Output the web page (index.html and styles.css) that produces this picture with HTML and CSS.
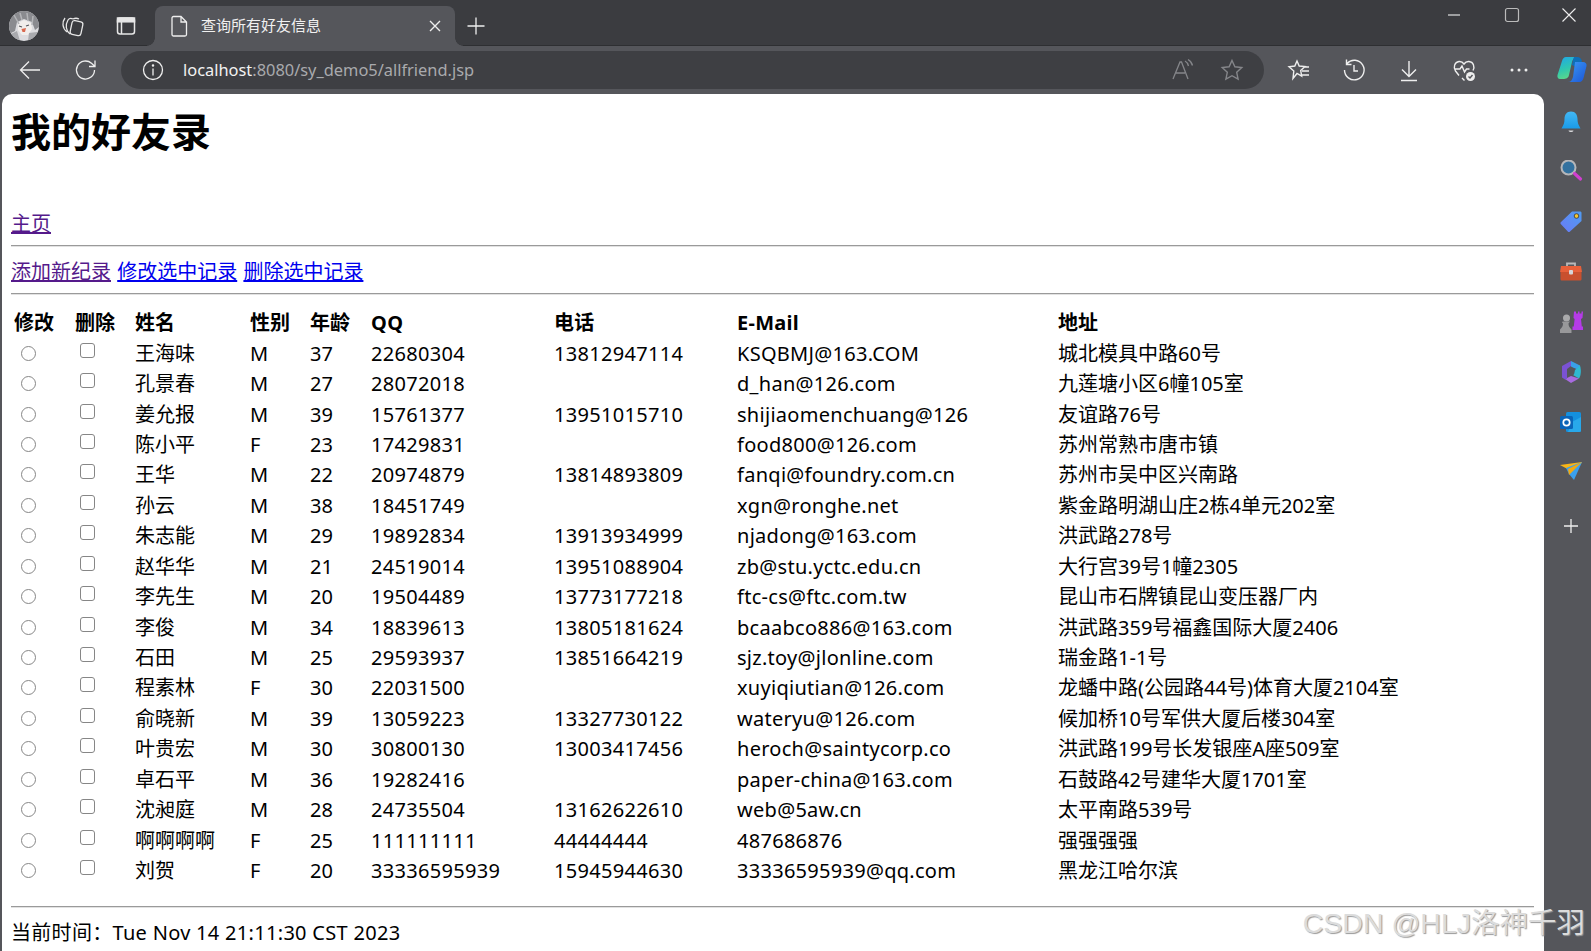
FILE: index.html
```html
<!DOCTYPE html>
<html lang="zh-CN">
<head>
<meta charset="utf-8">
<title>查询所有好友信息</title>
<link rel="stylesheet" href="styles.css">
</head>
<body>
<header class="tabbar">
  <svg class="avatar" viewBox="0 0 30 30"><defs><clipPath id="av"><circle cx="15" cy="15" r="15"/></clipPath></defs><g clip-path="url(#av)"><rect width="30" height="30" fill="#dcdcdf"/><path d="M0 0h30v16l-4 3-3-8-8-3-7 3-2 9-6 3z" fill="#8a8b8f"/><path d="M9 12l6-3 7 3 1 6-4 6h-6l-4-5z" fill="#f1eeec"/><path d="M12.500 18l4.500-1-1 4h-2.500z" fill="#d9694f"/><path d="M0 24l8-4 3 10H0zM20 22l8-1v9h-9z" fill="#a9aaae"/><path d="M5 4l5 9M11 2l2 7M18 2l1 8M24 5l-1 9" stroke="#b4b5b8" stroke-width="1.500"/><path d="M10 15l3 1M17 15l3-1" stroke="#55565b" stroke-width="1.200"/></g></svg>
  <svg class="ico ico-tabs" viewBox="0 0 24 24" fill="none" stroke="#e6e6e6" stroke-width="1.300"><rect x="10" y="7" width="11" height="14" rx="2.500" transform="rotate(12 15 14)"/><path d="M9 20C5 17 4 11 7 6c1-1.500 3-2 5-1M6 18C1 14 1 8 4 4"/><path d="M12 5c2-1 4-1 6 0"/></svg>
  <svg class="ico ico-vtab" viewBox="0 0 24 24" fill="none" stroke="#e6e6e6" stroke-width="1.500"><rect x="3.500" y="4" width="17" height="16" rx="2.500"/><rect x="3.500" y="4" width="17" height="3.800" fill="#e6e6e6"/><path d="M7.500 8v12"/></svg>
  <div class="tab">
    <svg class="ico" viewBox="0 0 24 24" fill="none" stroke="#eee" stroke-width="1.300"><path d="M6.500 2.500h7.500l5.500 5.500v12.500a1.500 1.500 0 0 1-1.500 1.500H6.500A1.500 1.500 0 0 1 5 20.500V4a1.500 1.500 0 0 1 1.500-1.500zM14 2.500V8h5.500"/></svg>
    <span class="tab-title">查询所有好友信息</span>
    <svg class="tab-close" viewBox="0 0 12 12" fill="none" stroke="#eee" stroke-width="1.400"><path d="M1 1l10 10M11 1L1 11"/></svg>
  </div>
  <svg class="ico ico-new" viewBox="0 0 24 24" fill="none" stroke="#eee" stroke-width="1.300"><path d="M12 3.500v17M3.500 12h17"/></svg>
  <div class="winctl">
    <svg class="ico" viewBox="0 0 24 24" fill="none" stroke="#eee" stroke-width="1.100"><path d="M6 12h12"/></svg>
    <svg class="ico" viewBox="0 0 24 24" fill="none" stroke="#bbb" stroke-width="1.200"><rect x="5.500" y="5.500" width="13" height="13" rx="2"/></svg>
    <svg class="ico" viewBox="0 0 24 24" fill="none" stroke="#eee" stroke-width="1.100"><path d="M5.500 5.500l13 13M18.500 5.500l-13 13"/></svg>
  </div>
</header>

<nav class="toolbar">
  <svg class="ico ico-back" viewBox="0 0 24 24" fill="none" stroke="#eee" stroke-width="1.300"><path d="M22 12H2.500M11 3.500L2.500 12l8.500 8.500"/></svg>
  <svg class="ico ico-reload" viewBox="0 0 24 24" fill="none" stroke="#eee" stroke-width="1.300"><path d="M20.500 12a9 9 0 1 1-3-6.700L20.500 8M21 2.500V8.500h-6"/></svg>
  <div class="address">
    <svg class="ico" viewBox="0 0 24 24" fill="none" stroke="#eee" stroke-width="1.300"><circle cx="12" cy="12" r="9.500"/><path d="M12 10.500v7"/><circle cx="12" cy="7.500" r=".6" fill="#eee"/></svg>
    <span class="url"><span class="url-host">localhost</span>:8080/sy_demo5/allfriend.jsp</span>
    <svg class="ico ico-read" viewBox="0 0 24 24" fill="none" stroke="#85868a" stroke-width="1.300"><path d="M3 21L10 4h1.500L18 21M6 15h9M15 3c2 1 3 3 3.500 5M18 1.500c2.500 1.500 4 3.500 4.500 6"/></svg>
    <svg class="ico ico-star" viewBox="0 0 24 24" fill="none" stroke="#85868a" stroke-width="1.400"><path d="M12 2.500l2.900 6.300 6.900.8-5.100 4.700 1.400 6.800-6.100-3.400-6.100 3.400 1.400-6.800L2.200 9.600l6.900-.8z"/></svg>
  </div>
  <svg class="ico ico-fav" viewBox="0 0 24 24" fill="none" stroke="#eee" stroke-width="1.400"><path d="M10 3l2.200 5 5.800.6-4.300 4 1 5.500L10 15.500 6 20.500l.8-7.500L2 8.800 7.800 8zM16 9h6M15 13h7M15 17h7"/></svg>
  <svg class="ico ico-tool" viewBox="0 0 24 24" fill="none" stroke="#eee" stroke-width="1.400"><path d="M5 5.500A9.800 9.800 0 1 1 2.500 12M4.500 1.500v5h5M12 7v6h4"/></svg>
  <svg class="ico ico-tool" viewBox="0 0 24 24" fill="none" stroke="#eee" stroke-width="1.400"><path d="M12 3v15M5 11.500l7 7 7-7M4 22.500h16"/></svg>
  <svg class="ico ico-tool" viewBox="0 0 24 24" fill="none" stroke="#eee" stroke-width="1.400"><path d="M7 17.500L3.500 13C1 9.500 2.500 4 7 3.500c2.500-.2 4 1 5 2.500 1-1.500 2.500-2.700 5-2.500 4.500.5 6 5 4 9M2.500 11H8l2-3 2.500 6 2-3h3M10 20l2.500 2.500"/><circle cx="18.500" cy="18.500" r="4.500" fill="#eee" stroke="none"/><path d="M16.500 18.500l1.500 1.500 2.500-3" stroke="#55565b"/></svg>
  <svg class="ico ico-tool" viewBox="0 0 24 24" fill="#eee"><circle cx="5" cy="12" r="1.500"/><circle cx="12" cy="12" r="1.500"/><circle cx="19" cy="12" r="1.500"/></svg>
  <svg class="ico-copilot" viewBox="0 0 30 30"><defs><linearGradient id="cp1" x1="0" y1="0" x2="0.300" y2="1"><stop offset="0" stop-color="#1fa7ea"/><stop offset=".6" stop-color="#2fc7b0"/><stop offset="1" stop-color="#58d68d"/></linearGradient><linearGradient id="cp2" x1="0" y1="0" x2="1" y2="1"><stop offset="0" stop-color="#3a9bf5"/><stop offset="1" stop-color="#1d55d6"/></linearGradient></defs><path d="M9 2h11c-3 0-4 2-5 5l-3 13c-.5 3-3 4-6 4H3c-2 0-3-2-2.500-4L5 6c.5-2 2-4 4-4z" fill="url(#cp1)"/><path d="M17 2h3c3 0 4 2 5 4l-4 7-6-3 1-5z" fill="#0e6fb8"/><path d="M18 7h8c2.500 0 4 2 3.500 4l-3 12c-.5 2-2 4-4 4H11c3 0 4-2 5-5z" fill="url(#cp2)"/></svg>
</nav>

<div class="main">
  <main class="page">
    <h1 class="title">我的好友录</h1>
    <p class="line line-home"><a class="visited" href="#">主页</a></p>
    <hr class="rule">
    <p class="line line-actions"><a class="visited" href="#">添加新纪录</a> <a href="#">修改选中记录</a> <a href="#">删除选中记录</a></p>
    <hr class="rule">
    <table class="friends">
      <colgroup><col class="c-s"><col class="c-s"><col class="c-name"><col class="c-s"><col class="c-age"><col class="c-num"><col class="c-num"><col class="c-mail"><col class="c-addr"></colgroup>
      <thead><tr><th>修改</th><th>删除</th><th>姓名</th><th>性别</th><th>年龄</th><th>QQ</th><th>电话</th><th>E-Mail</th><th>地址</th></tr></thead>
      <tbody>
        <tr><td><input class="rd" type="radio" name="f"></td><td><input class="cb" type="checkbox"></td><td>王海味</td><td>M</td><td>37</td><td>22680304</td><td>13812947114</td><td>KSQBMJ@163.COM</td><td>城北模具中路60号</td></tr>
        <tr><td><input class="rd" type="radio" name="f"></td><td><input class="cb" type="checkbox"></td><td>孔景春</td><td>M</td><td>27</td><td>28072018</td><td></td><td>d_han@126.com</td><td>九莲塘小区6幢105室</td></tr>
        <tr><td><input class="rd" type="radio" name="f"></td><td><input class="cb" type="checkbox"></td><td>姜允报</td><td>M</td><td>39</td><td>15761377</td><td>13951015710</td><td>shijiaomenchuang@126</td><td>友谊路76号</td></tr>
        <tr><td><input class="rd" type="radio" name="f"></td><td><input class="cb" type="checkbox"></td><td>陈小平</td><td>F</td><td>23</td><td>17429831</td><td></td><td>food800@126.com</td><td>苏州常熟市唐市镇</td></tr>
        <tr><td><input class="rd" type="radio" name="f"></td><td><input class="cb" type="checkbox"></td><td>王华</td><td>M</td><td>22</td><td>20974879</td><td>13814893809</td><td>fanqi@foundry.com.cn</td><td>苏州市吴中区兴南路</td></tr>
        <tr><td><input class="rd" type="radio" name="f"></td><td><input class="cb" type="checkbox"></td><td>孙云</td><td>M</td><td>38</td><td>18451749</td><td></td><td>xgn@ronghe.net</td><td>紫金路明湖山庄2栋4单元202室</td></tr>
        <tr><td><input class="rd" type="radio" name="f"></td><td><input class="cb" type="checkbox"></td><td>朱志能</td><td>M</td><td>29</td><td>19892834</td><td>13913934999</td><td>njadong@163.com</td><td>洪武路278号</td></tr>
        <tr><td><input class="rd" type="radio" name="f"></td><td><input class="cb" type="checkbox"></td><td>赵华华</td><td>M</td><td>21</td><td>24519014</td><td>13951088904</td><td>zb@stu.yctc.edu.cn</td><td>大行宫39号1幢2305</td></tr>
        <tr><td><input class="rd" type="radio" name="f"></td><td><input class="cb" type="checkbox"></td><td>李先生</td><td>M</td><td>20</td><td>19504489</td><td>13773177218</td><td>ftc-cs@ftc.com.tw</td><td>昆山市石牌镇昆山变压器厂内</td></tr>
        <tr><td><input class="rd" type="radio" name="f"></td><td><input class="cb" type="checkbox"></td><td>李俊</td><td>M</td><td>34</td><td>18839613</td><td>13805181624</td><td>bcaabco886@163.com</td><td>洪武路359号福鑫国际大厦2406</td></tr>
        <tr><td><input class="rd" type="radio" name="f"></td><td><input class="cb" type="checkbox"></td><td>石田</td><td>M</td><td>25</td><td>29593937</td><td>13851664219</td><td>sjz.toy@jlonline.com</td><td>瑞金路1-1号</td></tr>
        <tr><td><input class="rd" type="radio" name="f"></td><td><input class="cb" type="checkbox"></td><td>程素林</td><td>F</td><td>30</td><td>22031500</td><td></td><td>xuyiqiutian@126.com</td><td>龙蟠中路(公园路44号)体育大厦2104室</td></tr>
        <tr><td><input class="rd" type="radio" name="f"></td><td><input class="cb" type="checkbox"></td><td>俞晓新</td><td>M</td><td>39</td><td>13059223</td><td>13327730122</td><td>wateryu@126.com</td><td>候加桥10号军供大厦后楼304室</td></tr>
        <tr><td><input class="rd" type="radio" name="f"></td><td><input class="cb" type="checkbox"></td><td>叶贵宏</td><td>M</td><td>30</td><td>30800130</td><td>13003417456</td><td>heroch@saintycorp.co</td><td>洪武路199号长发银座A座509室</td></tr>
        <tr><td><input class="rd" type="radio" name="f"></td><td><input class="cb" type="checkbox"></td><td>卓石平</td><td>M</td><td>36</td><td>19282416</td><td></td><td>paper-china@163.com</td><td>石鼓路42号建华大厦1701室</td></tr>
        <tr><td><input class="rd" type="radio" name="f"></td><td><input class="cb" type="checkbox"></td><td>沈昶庭</td><td>M</td><td>28</td><td>24735504</td><td>13162622610</td><td>web@5aw.cn</td><td>太平南路539号</td></tr>
        <tr><td><input class="rd" type="radio" name="f"></td><td><input class="cb" type="checkbox"></td><td>啊啊啊啊</td><td>F</td><td>25</td><td>111111111</td><td>44444444</td><td>487686876</td><td>强强强强</td></tr>
        <tr><td><input class="rd" type="radio" name="f"></td><td><input class="cb" type="checkbox"></td><td>刘贺</td><td>F</td><td>20</td><td>33336595939</td><td>15945944630</td><td>33336595939@qq.com</td><td>黑龙江哈尔滨</td></tr>
      </tbody>
    </table>
    <hr class="rule rule-end">
    <p class="line line-time">当前时间：Tue Nov 14 21:11:30 CST 2023</p>
  </main>
  <aside class="sidebar">
    <svg class="side" viewBox="0 0 24 24"><defs><linearGradient id="bell" x1="0" y1="0" x2="0" y2="1"><stop offset="0" stop-color="#43b8f5"/><stop offset="1" stop-color="#1a9be8"/></linearGradient></defs><path d="M12 1.500c-4.500 0-6.500 3.500-6.500 7.500 0 4-1 6-3 9.500h19c-2-3.500-3-5.500-3-9.500 0-4-2-7.500-6.500-7.500z" fill="url(#bell)"/><path d="M9.500 20.500h5c-.5 2-4.500 2-5 0z" fill="#d5d5d8"/></svg>
    <svg class="side" viewBox="0 2 24 24" fill="none"><circle cx="9.500" cy="9.500" r="7" fill="#33719f" stroke="#b5b6b9" stroke-width="2"/><path d="M15.500 15.500l6 5.500" stroke="#d13fd0" stroke-width="3.200" stroke-linecap="round"/></svg>
    <svg class="side" viewBox="0 1 24 24"><defs><linearGradient id="tag" x1="0" y1="1" x2="1" y2="0"><stop offset="0" stop-color="#6a7bf5"/><stop offset="1" stop-color="#4f9cf2"/></linearGradient></defs><path d="M13 2.500h8c1 0 1.500.5 1.500 1.500v8L11 22.500c-.7.7-1.500.7-2.200 0L2 15.200c-.7-.7-.7-1.500 0-2.200z" fill="url(#tag)"/><circle cx="17.500" cy="7" r="2.300" fill="#f4c430" stroke="#333" stroke-width=".8"/></svg>
    <svg class="side" viewBox="0 0 24 24"><path d="M8 6V3.500h8V6" fill="none" stroke="#b8b8ba" stroke-width="1.800"/><path d="M2 6h20l1 6H1z" fill="#e8603a"/><path d="M1.500 12h21v7c0 1-.5 1.500-1.500 1.500H3c-1 0-1.500-.5-1.500-1.500z" fill="#c9502e"/><rect x="10" y="10" width="4" height="4.500" rx="1" fill="#d5d5d8"/></svg>
    <svg class="side" viewBox="0 0 24 24"><path d="M15 1.500h2v2h2v-2h1.500v2h2v-2H24L23.500 8l-1.500 1 .8 7.500H24V20H13.500v-3.500h1.300L15.600 9 14.500 8z" fill="#b53be8"/><circle cx="7.500" cy="8" r="3.500" fill="#a9a9ab"/><path d="M4 11.500h7l-1.500 2c0 2.500 1 4 3 6v3.500H1v-3.500c2-2 3-3.500 3-6L2.800 12z" fill="#98989a"/></svg>
    <svg class="side" viewBox="0 0 24 24"><path d="M12 1l9 4.500v5L14 7.500 12 6.500z" fill="#39a0e8"/><path d="M21 5.500c1.500 5 1 10-1 13l-6-3.500 2-5z" fill="#2fb9d0"/><path d="M6 19l6-3 8 2.500L12 23z" fill="#a86be0"/><path d="M3 6l9-5v5l-4 3v10l-2 .5L3 17.500z" fill="#7a52d4"/><circle cx="12" cy="12" r="3.500" fill="#55565b"/></svg>
    <svg class="side" viewBox="0 0 24 24"><rect x="7" y="2" width="15" height="20" rx="1.500" fill="#1490df"/><path d="M13 12l9-5v13c0 1-.5 2-1.500 2H9z" fill="#28a8ea"/><rect x="1" y="6" width="13" height="13" rx="1.500" fill="#0a64b8"/><circle cx="7.500" cy="12.500" r="3.200" fill="none" stroke="#fff" stroke-width="1.700"/></svg>
    <svg class="side" viewBox="0 2 24 24"><path d="M1 7l22-3-7 11z" fill="#f7b519"/><path d="M23 4L7 10l3 6 5 6z" fill="#3aa0ee"/><path d="M23 4L9 11l1 6z" fill="#f4a90f"/></svg>
    <svg class="side side-add" viewBox="0 0 24 24" fill="none" stroke="#eee" stroke-width="1.300"><path d="M12 5v14M5 12h14"/></svg>
  </aside>
</div>
<div class="watermark">CSDN @HLJ洛神千羽</div>
</body>
</html>
```
FILE: styles.css
```css
* { box-sizing: border-box; }
html, body { margin: 0; padding: 0; }
body {
  position: relative;
  width: 1591px;
  height: 951px;
  overflow: hidden;
  background: #55565b;
  font-family: "Noto Sans", "Noto Sans CJK SC", sans-serif;
  color: #000;
}
.ico { width: 24px; height: 24px; flex: none; display: block; }

.tabbar {
  height: 46px;
  background: #3b3c40;
  border-bottom: 1px solid #2e2f32;
  display: flex;
  align-items: center;
  padding: 6px 10px 0 9px;
}
.avatar { width: 30px; height: 30px; flex: none; }
.ico-tabs { margin-left: 22px; }
.ico-vtab { margin-left: 29px; }
.tab {
  position: relative;
  margin-left: 17px;
  margin-bottom: -1px;
  width: 300px;
  height: 40px;
  align-self: flex-end;
  background: #55565b;
  border-radius: 8px 8px 0 0;
  display: flex;
  align-items: center;
  padding: 0 14px 0 12px;
}
.tab::before, .tab::after {
  content: "";
  position: absolute;
  bottom: 0;
  width: 8px;
  height: 8px;
}
.tab::before { left: -8px; background: radial-gradient(circle at 0 0, #3b3c40 7.5px, #55565b 8px); }
.tab::after { right: -8px; background: radial-gradient(circle at 100% 0, #3b3c40 7.5px, #55565b 8px); }
.tab-title {
  margin-left: 10px;
  margin-bottom: 3px;
  font-size: 15px;
  color: #f0f0f0;
  white-space: nowrap;
  flex: 1;
}
.tab-close { width: 12px; height: 12px; flex: none; }
.ico-new { margin-left: 9px; }
.winctl { margin-left: auto; display: flex; gap: 33.5px; margin-top: -22px; }

.toolbar {
  height: 48px;
  background: #55565b;
  display: flex;
  align-items: center;
  padding-left: 18px;
}
.ico-reload { margin-left: 32px; }
.address {
  margin-left: 23px;
  width: 1143px;
  height: 38px;
  border-radius: 19px;
  background: #3e3f43;
  display: flex;
  align-items: center;
  padding: 0 20px;
}
.url {
  margin-left: 18px;
  margin-bottom: 1px;
  font-size: 16.4px;
  color: #a9aaad;
  white-space: nowrap;
}
.url-host { color: #f2f2f2; }
.ico-read { margin-left: auto; }
.ico-star { margin-left: 26px; }
.ico-fav { margin-left: 23px; }
.ico-tool { margin-left: 31px; }
.ico-copilot { width: 30px; height: 30px; flex: none; display: block; margin-left: 26px; }

.main { display: flex; height: 857px; }
.page {
  width: 1542px;
  margin-left: 2px;
  flex: none;
  background: #fff;
  border-radius: 10px 10px 0 0;
  padding: 0 10px 0 9px;
  overflow: hidden;
}
.title {
  margin: 13px 0 54px;
  font-size: 40px;
  line-height: 50px;
  font-weight: 700;
}
.line { margin: 0; font-size: 20px; line-height: 26px; }
.line a { color: #0000ee; }
.line a.visited { color: #551a8b; }
.line-home { margin-bottom: -1px; }
.line-actions { margin-top: 12px; margin-bottom: -1px; word-spacing: 1px; }
.line-time { letter-spacing: .3px; }
.rule {
  margin: 9px 0;
  height: 2px;
  border: 0;
  border-top: 1px solid #9a9a9a;
  border-bottom: 1px solid #e2e2e2;
}
.friends {
  margin-top: 13px;
  border-collapse: collapse;
  table-layout: fixed;
  width: 1524px;
  font-size: 20px;
}
.friends tr { height: 30.44px; }
.friends th, .friends td {
  padding: 0 0 0 4px;
  line-height: 26px;
  text-align: left;
  white-space: nowrap;
}
.friends th { font-weight: 700; }
.friends th:first-child { padding-left: 3px; }
.friends th:nth-child(n+6):nth-child(-n+7),
.friends td:nth-child(n+6):nth-child(-n+7) { letter-spacing: .32px; }
.friends th:nth-child(8),
.friends td:nth-child(8) { letter-spacing: .28px; }
.c-s { width: 60px; }
.c-name { width: 115px; }
.c-age { width: 61px; }
.c-num { width: 183px; }
.c-mail { width: 321px; }
.c-addr { width: 481px; }
.rd, .cb {
  appearance: none;
  display: block;
  width: 15px;
  height: 15px;
  margin: 0;
  background: #fff;
  border: 1.3px solid #868686;
}
.rd { border-radius: 50%; margin-left: 6px; margin-top: -1px; }
.cb { border-radius: 3px; margin-left: 5px; margin-top: -7px; }
.rule-end { margin: 20px 0 12px; }

.sidebar {
  flex: 1;
  display: flex;
  flex-direction: column;
  align-items: center;
  gap: 26px;
  padding-top: 16px;
  padding-left: 7px;
}
.side { width: 24px; height: 24px; flex: none; display: block; }
.side-add { margin-top: 4px; }

.watermark {
  position: absolute;
  right: 6px;
  top: 905px;
  font-family: "Liberation Sans", "Noto Sans CJK SC", sans-serif;
  font-size: 28.5px;
  line-height: 36px;
  color: #dcdcdc;
  text-shadow: 1px 1px 1px #9a9a9a;
  white-space: nowrap;
}
```
